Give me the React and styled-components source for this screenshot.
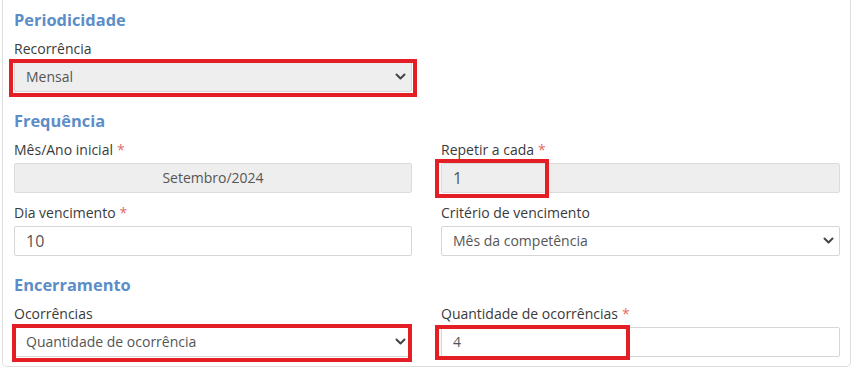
import React from "react";
import styled, { createGlobalStyle } from "styled-components";

const Global = createGlobalStyle`
  html, body { margin: 0; padding: 0; background: #fff; }
  body { font-family: "Open Sans", "Noto Sans", sans-serif; }
  * { box-sizing: border-box; }
`;

const Panel = styled.div`
  margin-left: 2px;
  width: 849px;
  border: 1px solid #dedede;
  border-top: none;
  border-radius: 0 0 5px 5px;
  padding: 10px 10px 9px 11px;
  background: #fff;
`;

const Section = styled.section`
  & + & { margin-top: 19px; }
`;

const Heading = styled.h3`
  margin: 0 0 10px;
  font-size: 16.4px;
  line-height: 20px;
  font-weight: 700;
  color: #5b8dc8;
`;

const Grid = styled.div`
  display: grid;
  grid-template-columns: 398px 399px;
  column-gap: 29px;
  row-gap: 11px;
`;

const Field = styled.div`
  position: relative;
  display: flex;
  flex-direction: column;
`;

const Label = styled.label`
  font-size: 14px;
  line-height: 18px;
  color: #3a3a3a;
  margin-bottom: 4px;
`;

const Req = styled.span`
  color: #e36b6b;
  margin-left: 4px;
`;

const ControlWrap = styled.div`
  position: relative;
  height: 30px;
`;

const Input = styled.input`
  width: 100%;
  height: 30px;
  border: 1px solid ${(p) => (p.$disabled ? "#dcdcdc" : "#d6d6d6")};
  border-radius: 2px;
  background: ${(p) => (p.$disabled ? "#eeeeee" : "#fff")};
  padding: 0 ${(p) => (p.$center ? "0" : "11px")} 1px;
  font-family: "Open Sans", sans-serif;
  font-size: ${(p) => p.$size || 14}px;
  color: #555;
  text-align: ${(p) => (p.$center ? "center" : "left")};
  outline: none;
`;

const Select = styled.select`
  appearance: none;
  -webkit-appearance: none;
  width: 100%;
  height: 30px;
  border: 1px solid #d6d6d6;
  border-radius: 2px;
  background: ${(p) => (p.$disabled ? "#eeeeee" : "#fff")};
  padding: 0 30px 2px 11px;
  font-family: "Open Sans", sans-serif;
  font-size: 14px;
  color: #555;
  outline: none;
`;

const Chevron = styled.svg`
  position: absolute;
  right: 6px;
  top: 11px;
  width: 11px;
  height: 8px;
  pointer-events: none;
`;

const Highlight = styled.div`
  position: absolute;
  left: ${(p) => p.$l}px;
  top: ${(p) => p.$t}px;
  width: ${(p) => p.$w}px;
  height: ${(p) => p.$h}px;
  border: 4px solid #e31e24;
  pointer-events: none;
`;

function SelectBox({ value, disabled, highlight }) {
  return (
    <ControlWrap>
      <Select $disabled={disabled} value={value} onChange={() => {}}>
        <option>{value}</option>
      </Select>
      <Chevron viewBox="0 0 11 8">
        <path d="M1.5 1.5 L5.5 5.5 L9.5 1.5" fill="none" stroke="#444" strokeWidth="2" strokeLinecap="round" strokeLinejoin="round" />
      </Chevron>
      {highlight && <Highlight {...highlight} />}
    </ControlWrap>
  );
}

function TextBox({ value, disabled, center, size, highlight }) {
  return (
    <ControlWrap>
      <Input value={value} readOnly $disabled={disabled} $center={center} $size={size} />
      {highlight && <Highlight {...highlight} />}
    </ControlWrap>
  );
}

export default function App() {
  return (
    <>
      <Global />
      <Panel>
        <Section>
          <Heading>Periodicidade</Heading>
          <Grid>
            <Field>
              <Label>Recorrência</Label>
              <SelectBox value="Mensal" disabled highlight={{ $l: -5, $t: -3, $w: 408, $h: 38 }} />
            </Field>
          </Grid>
        </Section>

        <Section>
          <Heading>Frequência</Heading>
          <Grid>
            <Field>
              <Label>Mês/Ano inicial<Req>*</Req></Label>
              <TextBox value="Setembro/2024" disabled center />
            </Field>
            <Field>
              <Label>Repetir a cada<Req>*</Req></Label>
              <TextBox value="1" disabled size={16} highlight={{ $l: -6, $t: -4, $w: 114, $h: 39 }} />
            </Field>
            <Field>
              <Label>Dia vencimento<Req>*</Req></Label>
              <TextBox value="10" size={16} />
            </Field>
            <Field>
              <Label>Critério de vencimento</Label>
              <SelectBox value="Mês da competência" />
            </Field>
          </Grid>
        </Section>

        <Section>
          <Heading>Encerramento</Heading>
          <Grid>
            <Field>
              <Label>Ocorrências</Label>
              <SelectBox value="Quantidade de ocorrência" highlight={{ $l: -2, $t: -3, $w: 400, $h: 38 }} />
            </Field>
            <Field>
              <Label>Quantidade de ocorrências<Req>*</Req></Label>
              <TextBox value="4" size={14} highlight={{ $l: -6, $t: -2, $w: 195, $h: 35 }} />
            </Field>
          </Grid>
        </Section>
      </Panel>
    </>
  );
}
